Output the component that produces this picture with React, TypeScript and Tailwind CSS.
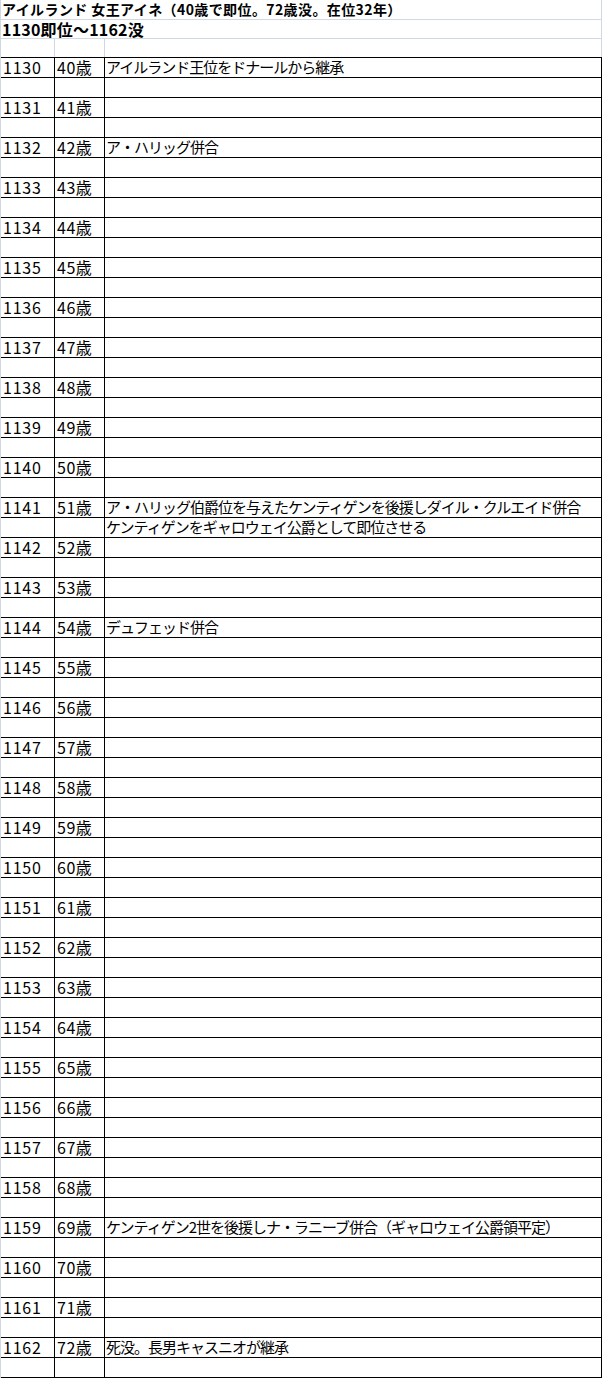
import React from "react";

type Row = { year?: string; age?: string; text?: string };

const events: Record<number, string> = {
  1130: "アイルランド王位をドナールから継承",
  1132: "ア・ハリッグ併合",
  1141: "ア・ハリッグ伯爵位を与えたケンティゲンを後援しダイル・クルエイド併合",
  1144: "デュフェッド併合",
  1159: "ケンティゲン2世を後援しナ・ラニーブ併合（ギャロウェイ公爵領平定）",
  1162: "死没。長男キャスニオが継承",
};

const second: Record<number, string> = {
  1141: "ケンティゲンをギャロウェイ公爵として即位させる",
};

const rows: Row[] = [];
for (let y = 1130; y <= 1162; y++) {
  rows.push({ year: String(y), age: `${y - 1090}歳`, text: events[y] });
  rows.push({ text: second[y] });
}

export default function App() {
  return (
    <div className="w-[602px] h-[1378px] bg-white border-l border-[#d0d7e5] text-black overflow-hidden font-['Noto_Sans_CJK_JP','Noto_Sans',sans-serif]">
      <div className="h-[20px] border-b border-r border-[#d0d7e5] pl-[1px] text-[14px] font-bold leading-[19px] tracking-[0.4px] whitespace-nowrap">
        アイルランド 女王アイネ（40歳で即位。72歳没。在位32年）
      </div>
      <div className="h-[19px] border-b border-r border-[#d0d7e5] pl-[1px] text-[16px] font-bold leading-[18px] tracking-[0.2px] whitespace-nowrap">
        1130即位～1162没
      </div>
      <div className="h-[18px] flex">
        <div className="w-[54px] border-r border-[#d0d7e5]" />
        <div className="w-[50px] border-r border-[#d0d7e5]" />
        <div className="flex-1 border-r border-[#d0d7e5]" />
      </div>
      <div className="border-t border-black">
        {rows.map((r, i) => (
          <div key={i} className="h-[20px] flex border-b border-black text-[16px] leading-[18px] whitespace-nowrap">
            <div className="w-[54px] border-r border-black pl-[2px] tracking-[0.8px]">{r.year}</div>
            <div className="w-[50px] border-r border-black pl-[2px] tracking-[0.5px]">{r.age}</div>
            <div className="flex-1 border-r border-black pl-[1px] text-[15px] tracking-[-1px]">{r.text}</div>
          </div>
        ))}
      </div>
    </div>
  );
}
